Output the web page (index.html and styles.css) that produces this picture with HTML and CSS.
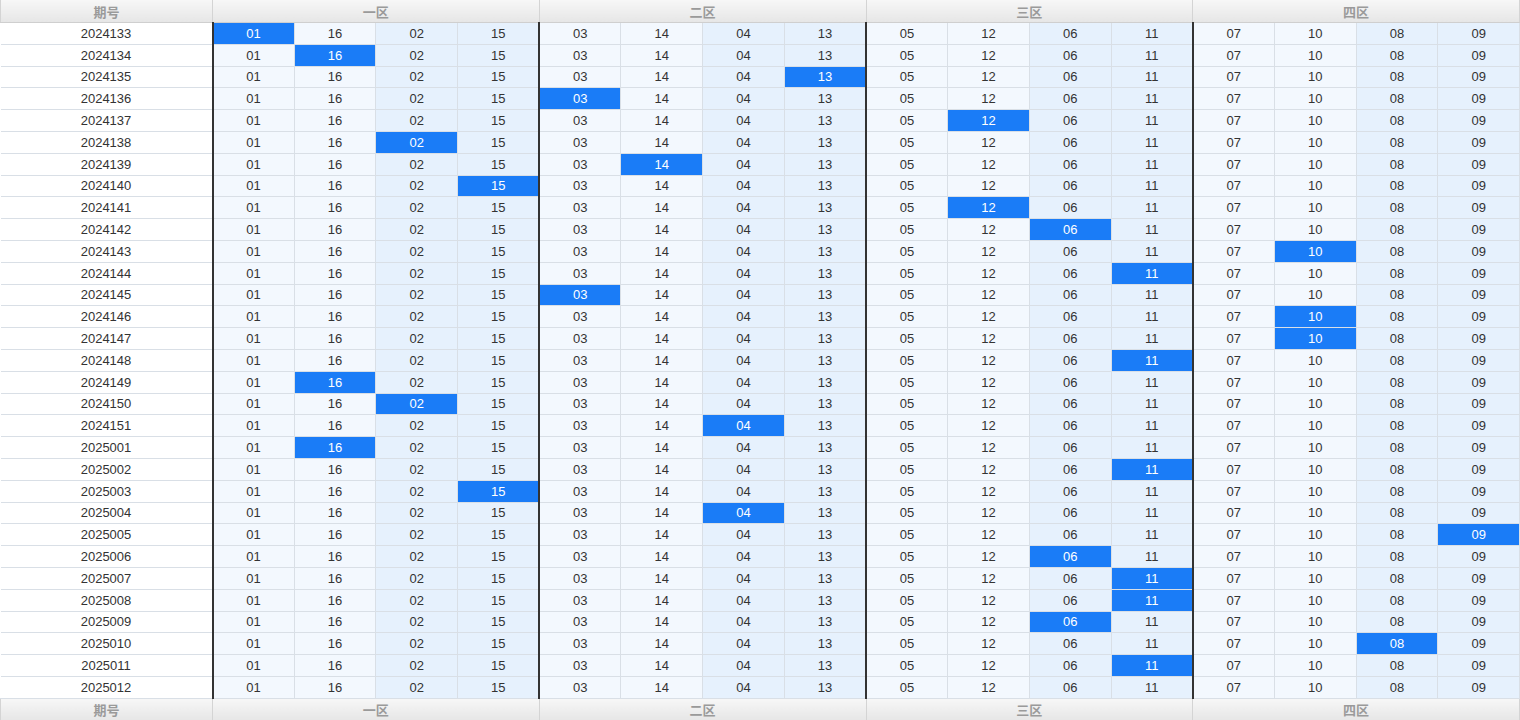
FILE: index.html
```html
<!DOCTYPE html>
<html lang="zh-CN">
<head>
  <meta charset="UTF-8" />
  <meta name="viewport" content="width=device-width, initial-scale=1.0"/>
  <title>分区走势</title>
  <link rel="stylesheet" href="styles.css">
</head>
<body>

  <table class="trend">
    <colgroup>
      <col class="col-issue">
      <col span="16" class="col-num">
    </colgroup>
    <thead>
      <tr>
        <th>期号</th>
        <th colspan="4">一区</th>
        <th colspan="4">二区</th>
        <th colspan="4">三区</th>
        <th colspan="4">四区</th>
      </tr>
    </thead>
    <tbody id="rows"></tbody>
    <tfoot>
      <tr>
        <th>期号</th>
        <th colspan="4">一区</th>
        <th colspan="4">二区</th>
        <th colspan="4">三区</th>
        <th colspan="4">四区</th>
      </tr>
    </tfoot>
  </table>

  <script>
    const zonas = [
      ["01", "16", "02", "15"],
      ["03", "14", "04", "13"],
      ["05", "12", "06", "11"],
      ["07", "10", "08", "09"]
    ];

    // 期号 -> 开出号码
    const dados = [
      ["2024133", "01"], ["2024134", "16"], ["2024135", "13"], ["2024136", "03"],
      ["2024137", "12"], ["2024138", "02"], ["2024139", "14"], ["2024140", "15"],
      ["2024141", "12"], ["2024142", "06"], ["2024143", "10"], ["2024144", "11"],
      ["2024145", "03"], ["2024146", "10"], ["2024147", "10"], ["2024148", "11"],
      ["2024149", "16"], ["2024150", "02"], ["2024151", "04"], ["2025001", "16"],
      ["2025002", "11"], ["2025003", "15"], ["2025004", "04"], ["2025005", "09"],
      ["2025006", "06"], ["2025007", "11"], ["2025008", "11"], ["2025009", "06"],
      ["2025010", "08"], ["2025011", "11"], ["2025012", ""]
    ];

    const tbody = document.getElementById("rows");
    dados.forEach(([qi, num]) => {
      let html = `<td class="issue">${qi}</td>`;
      zonas.forEach(zona => {
        zona.forEach((n, i) => {
          let cls = i < 2 ? "a" : "b";
          if (i === 0) cls += " first";
          if (n === num) cls += " hit";
          html += `<td class="${cls}">${n}</td>`;
        });
      });
      const tr = document.createElement("tr");
      tr.innerHTML = html;
      tbody.appendChild(tr);
    });
  </script>
</body>
</html>
```

FILE: styles.css
```css
body {
  margin: 0;
  font-family: "Liberation Sans", "Noto Sans CJK SC", sans-serif;
  background: #fff;
}
.trend {
  width: 1520px;
  table-layout: fixed;
  border-collapse: collapse;
  font-size: 13px;
  color: #333;
}
.col-issue {
  width: 212px;
}
.trend th {
  height: 22px;
  padding: 0;
  font-weight: bold;
  color: #9a9a9a;
  background: linear-gradient(#f7f7f7, #e6e6e6);
  border: 1px solid #d4d4d4;
  border-top: none;
  border-bottom: 1px solid #cfcfcf;
  text-align: center;
}
.trend tfoot th {
  border-top: 1px solid #d4d4d4;
}
.trend td {
  height: 21.8px;
  padding: 0;
  text-align: center;
  border: 1px solid #d9dfe6;
  box-sizing: border-box;
  line-height: 1;
}
.trend td.issue {
  background: #fff;
  border-left: none;
}
.trend td.a {
  background: #f3f8fe;
}
.trend td.b {
  background: #e6f1fd;
}
.trend td.first {
  border-left: 2px solid #333;
}
.trend td.hit {
  background: #1a7cf7;
  color: #fff;
}
```
